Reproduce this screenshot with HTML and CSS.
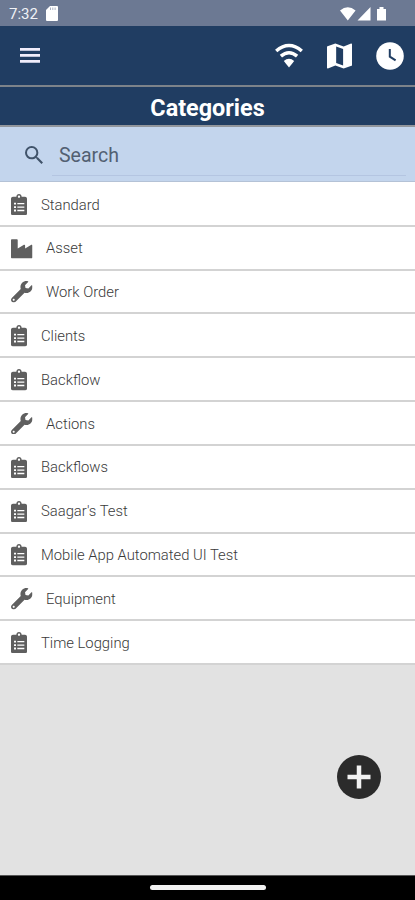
FILE: index.html
```html
<!DOCTYPE html>
<html lang="en">
<head>
<meta charset="utf-8">
<title>Categories</title>
<link rel="stylesheet" href="styles.css">
</head>
<body>
<svg class="defs" aria-hidden="true">
  <symbol id="clipboard" viewBox="0 0 384 512"><path fill-rule="evenodd" d="M336 64h-80c0-35.300-28.700-64-64-64s-64 28.700-64 64H48C21.500 64 0 85.500 0 112v352c0 26.500 21.500 48 48 48h288c26.500 0 48-21.500 48-48V112c0-26.500-21.500-48-48-48zM72 208h48v44H72zM72 290h48v44H72zM72 372h48v44H72zM152 214h168v32H152zM152 296h168v32H152zM152 378h168v32H152zM192 36a28 28 0 1 1 0 56a28 28 0 1 1 0-56z"/></symbol>
  <symbol id="industry" viewBox="0 0 512 512"><path d="M475.115 163.781L336 252.309v-68.280c0-18.916-20.931-30.399-36.885-20.248L160 252.309V56c0-13.255-10.745-24-24-24H24C10.745 32 0 42.745 0 56v400c0 13.255 10.745 24 24 24h464c13.255 0 24-10.745 24-24V184.029c0-18.917-20.931-30.399-36.885-20.248z"/></symbol>
  <symbol id="wrench" viewBox="0 0 512 512"><path d="M507.730 109.100c-2.240-9.030-13.540-12.090-20.120-5.510l-74.360 74.360-67.880-11.310-11.310-67.880 74.360-74.360c6.620-6.620 3.430-17.900-5.660-20.160-47.380-11.740-99.550.910-136.580 37.930-39.640 39.640-50.550 97.100-34.050 147.200L18.740 402.760c-24.990 24.990-24.990 65.510 0 90.500 24.990 24.990 65.510 24.990 90.500 0l213.210-213.210c50.120 16.710 107.470 5.680 147.370-34.220 37.070-37.070 49.700-89.320 37.910-136.730zM64 472c-13.250 0-24-10.750-24-24 0-13.260 10.750-24 24-24s24 10.740 24 24c0 13.250-10.750 24-24 24z"/></symbol>
</svg>
<div class="app">
  <div class="status">
    <span class="time">7:32</span>
    <svg class="sd" viewBox="0 0 12 15"><path d="M4 0h7q1 0 1 1v13q0 1-1 1H1q-1 0-1-1V4z"/><path class="slots" d="M4.500 1.500v2.500M6.800 1.500v2.500M9.100 1.500v2.500"/></svg>
    <svg class="signals" viewBox="0 0 47 14"><path d="M0 3.500Q7.800-3 15.600 3.500L7.800 13.500zM17.500 13.500L30.500 0v13.500zM37 2h2.500V0h4v2H46v11.500h-9z"/></svg>
  </div>
  <header class="bar">
    <svg class="menu" viewBox="0 0 20 15"><path d="M0 0h20v2.800H0zM0 6h20v2.800H0zM0 12h20v2.800H0z"/></svg>
    <svg class="wifi" viewBox="0 0 28 25"><path class="arc" d="M1.200 8Q14-3 26.800 8M5.900 13.200Q14 6.400 22.100 13.200"/><path d="M8.800 18Q14 13.600 19.200 18L14 24.500z"/></svg>
    <svg class="map" viewBox="3 3 18 18"><path d="M20.500 3l-.160.030L15 5.100 9 3 3.360 4.900c-.210.070-.360.250-.360.480V20.500c0 .280.220.500.500.500l.160-.030L9 18.900l6 2.100 5.640-1.900c.210-.070.360-.250.360-.480V3.500c0-.280-.220-.500-.500-.500zM14.600 18.800l-5-1.700V5.200l5 1.700V18.800z"/></svg>
    <svg class="clock" viewBox="0 0 28 28"><circle cx="14" cy="14" r="13.800"/><path class="hands" d="M13.800 7v7.600l5.800 3.800"/></svg>
  </header>
  <h1 class="title">Categories</h1>
  <div class="search">
    <svg class="lens" viewBox="3 3 17.500 17.500"><path d="M15.500 14h-.790l-.280-.270A6.471 6.471 0 0 0 16 9.500 6.500 6.500 0 1 0 9.500 16c1.610 0 3.090-.590 4.230-1.570l.270.280v.790l5 4.990L20.490 19l-4.990-5zm-6 0C7.010 14 5 11.990 5 9.500S7.010 5 9.500 5 14 7.010 14 9.500 11.990 14 9.500 14z"/></svg>
    <div class="field">Search</div>
  </div>
  <ul class="list">
    <li><svg class="clip"><use href="#clipboard"/></svg><span>Standard</span></li>
    <li><svg class="wide"><use href="#industry"/></svg><span>Asset</span></li>
    <li><svg class="wide"><use href="#wrench"/></svg><span>Work Order</span></li>
    <li><svg class="clip"><use href="#clipboard"/></svg><span>Clients</span></li>
    <li><svg class="clip"><use href="#clipboard"/></svg><span>Backflow</span></li>
    <li><svg class="wide"><use href="#wrench"/></svg><span>Actions</span></li>
    <li><svg class="clip"><use href="#clipboard"/></svg><span>Backflows</span></li>
    <li><svg class="clip"><use href="#clipboard"/></svg><span>Saagar's Test</span></li>
    <li><svg class="clip"><use href="#clipboard"/></svg><span>Mobile App Automated UI Test</span></li>
    <li><svg class="wide"><use href="#wrench"/></svg><span>Equipment</span></li>
    <li><svg class="clip"><use href="#clipboard"/></svg><span>Time Logging</span></li>
  </ul>
  <div class="space"></div>
  <div class="nav"><div class="handle"></div></div>
  <svg class="add" viewBox="0 0 44 44"><circle cx="22" cy="22" r="22"/><path d="M22 10.500v23M10.500 22h23"/></svg>
</div>
</body>
</html>
```
FILE: styles.css
```css
* { box-sizing: border-box; }
body { margin: 0; font-family: Roboto, "Liberation Sans", sans-serif; }
svg { display: block; flex: none; }
.defs { position: absolute; width: 0; height: 0; }
.app {
  position: relative;
  display: flex;
  flex-direction: column;
  height: 900px;
  background: #e2e2e2;
  overflow: hidden;
}
.status {
  display: flex;
  align-items: center;
  height: 26px;
  padding: 1px 28px 0 9px;
  background: #6c7993;
  color: #f0f2f6;
  fill: #fff;
}
.time { width: 37px; font-size: 15px; line-height: 18px; }
.sd { width: 12px; height: 15px; }
.slots { stroke: #aab2c2; stroke-width: 1; }
.signals { width: 47px; height: 14px; margin-left: auto; }
.bar {
  display: flex;
  align-items: center;
  height: 59px;
  padding: 0 11px 0 20px;
  background: #203d62;
  fill: #fff;
}
.menu { width: 20px; height: 15px; fill: #f0edfb; }
.wifi { width: 28px; height: 25px; margin-left: auto; }
.arc { fill: none; stroke: #fff; stroke-width: 3.500; }
.map { width: 25px; height: 26px; margin-left: 24px; }
.clock { width: 28px; height: 28px; margin-left: 24px; }
.hands { fill: none; stroke: #203d62; stroke-width: 2; }
.title {
  height: 42px;
  margin: 0;
  padding-top: 2px;
  border-top: 2px solid #7d838a;
  border-bottom: 2px solid #92969c;
  background: #203d62;
  color: #fff;
  font-size: 23.400px;
  font-weight: 700;
  line-height: 38px;
  text-align: center;
}
.search {
  display: flex;
  height: 55px;
  padding: 0 9px 0 25px;
  background: #c3d5ed;
  border-bottom: 1px solid #b4c2d6;
  color: #526072;
}
.lens { width: 18px; height: 18px; margin-top: 19px; fill: #40536a; }
.field {
  flex: 1;
  height: 49px;
  margin-left: 9px;
  padding-left: 7px;
  border-bottom: 1px solid #b4c5e1;
  font-size: 19.500px;
  line-height: 57px;
}
.list {
  margin: 0;
  padding: 1px 0 0;
  list-style: none;
  background: #fff;
  color: #3a3a3a;
  fill: #5f5f5f;
}
.list li {
  display: flex;
  align-items: center;
  height: 43.820px;
  padding: 1.400px 0 0 11px;
  border-bottom: 2px solid #d3d3d3;
  font-size: 14.800px;
  font-weight: 300;
}
.clip { width: 16px; height: 21.500px; margin-right: 14px; }
.wide { width: 21.500px; height: 21.500px; margin-right: 13.500px; }
.space { flex: 1; }
.nav {
  display: flex;
  justify-content: center;
  height: 25px;
  padding-top: 9px;
  border-top: 1px solid #555;
  background: #000;
}
.handle { width: 116px; height: 5px; border-radius: 3px; background: #f2f2f2; }
.add { position: absolute; left: 337px; top: 755px; width: 44px; height: 44px; fill: #2b2b2b; }
.add path { stroke: #f2f2f2; stroke-width: 4.500; }
```
